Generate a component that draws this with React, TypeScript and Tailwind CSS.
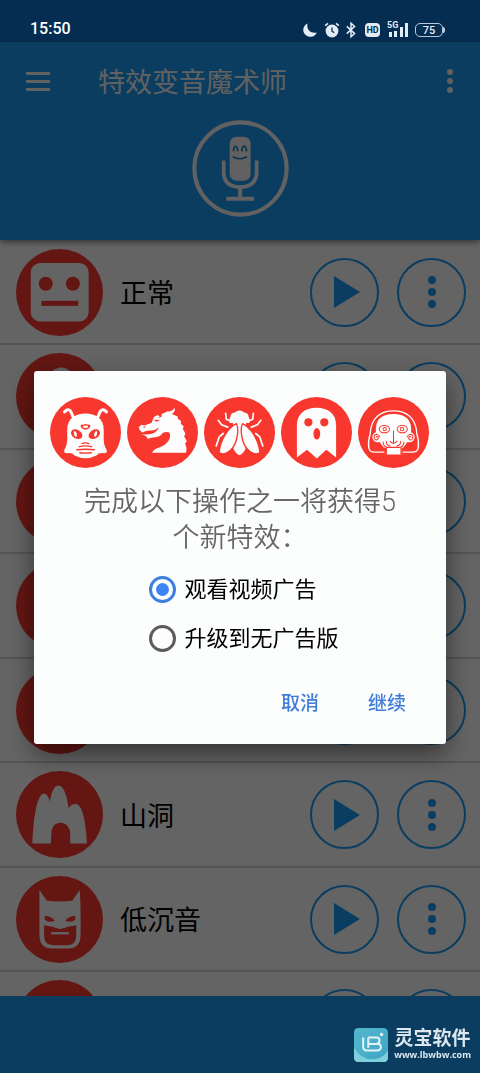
import { useState, type ReactNode } from "react";

type IconProps = { className?: string };

/* Status bar */

function StatusIcons() {
  return (
    <div className="flex items-center text-[#e3ebf6]">
      <svg viewBox="0 0 14 14" className="mr-[7px] size-[14px]" fill="currentColor">
        <path d="M4.6 0.4 A7 7 0 1 0 13.8 9.4 Q8 10.6 5.6 7 Q3.6 4 4.6 0.4Z" />
      </svg>
      <svg viewBox="0 0 16 16" className="mr-[6px] size-4" fill="none" stroke="currentColor">
        <circle cx="8" cy="9" r="6.4" fill="currentColor" stroke="none" />
        <path d="M1.2 3.6 L4 1.4 M14.8 3.6 L12 1.4" strokeWidth="1.7" />
        <path d="M8 5.6 V9.2 L10.2 10.6" stroke="#052d52" strokeWidth="1.3" />
      </svg>
      <svg viewBox="0 0 10 16" className="mr-[9px] h-4 w-[10px]" fill="none" stroke="currentColor" strokeWidth="1.5">
        <path d="M0.8 4.4 L8.6 11.6 L5 14.8 V1.2 L8.6 4.4 L0.8 11.6" />
      </svg>
      <span className="mr-2 flex h-[14px] w-[15px] items-center justify-center rounded-sm bg-[#e3ebf6] text-[9px] leading-none font-bold text-[#052d52]">
        HD
      </span>
      <span className="relative mr-[7px] block h-4 w-5">
        <span className="absolute -top-px -left-px text-[9px] leading-none font-bold">5G</span>
        <svg viewBox="0 0 20 16" className="size-full" fill="currentColor">
          <path d="M1 10h3v5H1zM6 9h3v6H6zM12 5h3v10h-3zM17 1h3v14h-3z" />
        </svg>
      </span>
      <span className="flex items-center">
        <span className="flex h-[14px] w-7 items-center justify-center rounded-[5px] border border-[#b9c8da] text-[11px] leading-none font-medium">
          75
        </span>
        <span className="h-[6px] w-[2px] rounded-r-sm bg-[#b9c8da]" />
      </span>
    </div>
  );
}

/* Round effect icons */

function Disc({ size, className, children }: { size: number; className?: string; children?: ReactNode }) {
  return (
    <svg viewBox={`0 0 ${size} ${size}`} className={className} fill="none" aria-hidden="true">
      <circle cx={size / 2} cy={size / 2} r={size / 2} fill="#f8382f" />
      {children}
    </svg>
  );
}

function RobotIcon({ className }: IconProps) {
  return (
    <Disc size={260} className={className}>
      <rect x="44" y="42" width="173" height="175" rx="28" fill="#fafafa" />
      <circle cx="89" cy="104" r="21" fill="#f8382f" />
      <circle cx="170" cy="104" r="21" fill="#f8382f" />
      <rect x="76" y="155" width="110" height="15" fill="#f8382f" />
    </Disc>
  );
}

function HeadIcon({ className }: IconProps) {
  return (
    <Disc size={260} className={className}>
      <circle cx="135" cy="79" r="36" fill="#fafafa" />
    </Disc>
  );
}

function PlainIcon({ className }: IconProps) {
  return <Disc size={260} className={className} />;
}

function CaveIcon({ className }: IconProps) {
  return (
    <Disc size={260} className={className}>
      <path
        d="M49 217C51 160 60 70 83 67C92 67 98 78 101 91C105 66 113 43 127 43C143 43 153 76 157 111C163 101 172 97 182 99C202 105 210 170 212 217H162V184C160 166 148 155 133 155C118 155 107 166 106 184L104 217Z"
        fill="#fafafa"
      />
    </Disc>
  );
}

function BatIcon({ className }: IconProps) {
  return (
    <Disc size={260} className={className}>
      <path
        d="M70 42L92 74Q131 78 168 74L190 42Q194 80 193 175Q193 217 155 217H108Q70 217 70 175Z"
        fill="#fafafa"
      />
      <path d="M84 147Q110 150 132 159Q155 150 180 147V178Q180 207 153 207H111Q84 207 84 178Z" fill="#f8382f" />
      <path d="M86 119Q106 121 116 134Q96 141 86 130ZM177 119Q157 121 147 134Q167 141 177 130Z" fill="#f8382f" />
      <path d="M105 171H158" stroke="#fafafa" strokeWidth="7" />
    </Disc>
  );
}

function AlienIcon({ className }: IconProps) {
  return (
    <Disc size={210} className={className}>
      <path d="M43 44Q56 31 63 46Q66 58 75 67M167 44Q154 31 147 46Q144 58 135 67" stroke="#fdfdfd" strokeWidth="9" strokeLinecap="round" />
      <path
        d="M51 98C50 64 75 49 105 49S160 64 159 98C159 124 157 139 167 155Q172 167 157 166Q144 165 137 173Q122 181 105 181T73 173Q66 165 53 166Q38 167 43 155C53 139 51 124 51 98Z"
        fill="#fdfdfd"
      />
      <ellipse cx="79" cy="110" rx="18" ry="13" fill="#f8382f" transform="rotate(30 79 110)" />
      <ellipse cx="131" cy="110" rx="18" ry="13" fill="#f8382f" transform="rotate(-30 131 110)" />
      <ellipse cx="75" cy="109" rx="4" ry="9" fill="#fdfdfd" transform="rotate(-15 75 109)" />
      <ellipse cx="135" cy="109" rx="4" ry="9" fill="#fdfdfd" transform="rotate(15 135 109)" />
      <path d="M90 86Q92 79 98 82Q105 77 112 82Q118 79 120 86Q116 96 105 97Q94 96 90 86Z" fill="#f8382f" />
      <ellipse cx="105" cy="88" rx="8" ry="4" fill="#fdfdfd" />
      <path d="M95 138Q105 133 115 138M87 147Q105 142 123 147M79 156Q105 153 131 156M88 165Q105 167 122 165" stroke="#f8382f" strokeWidth="4" strokeLinecap="round" />
    </Disc>
  );
}

function DragonIcon({ className }: IconProps) {
  return (
    <Disc size={210} className={className}>
      <path
        d="M35 89L43 82L52 84L73 76L79 60L90 53L97 57L92 63L103 58L102 51L119 43Q134 44 141 31Q143 46 132 50L149 57L151 65L160 71L159 79L168 87L165 94L173 109L169 116L177 131L172 137Q178 150 175 165H74Q78 155 99 148C121 139 132 122 126 106Q118 101 106 106Q100 118 82 119Q70 119 62 124L56 115L42 110Q62 113 78 107Q87 104 94 90Q82 100 69 99Q58 98 45 105L37 97Z"
        fill="#fdfdfd"
      />
      <path d="M78 67L98 68L88 73ZM47 88L56 87L51 92Z" fill="#f8382f" />
    </Disc>
  );
}

function FlyIcon({ className }: IconProps) {
  return (
    <Disc size={210} className={className}>
      <path
        d="M64 48L66 66L80 72L88 76M42 69L52 82L70 89M57 108L45 118L36 145M146 48L144 66L130 72L122 76M168 69L158 82L140 89M153 108L165 118L174 145"
        stroke="#fdfdfd"
        strokeWidth="5"
        strokeLinecap="round"
        strokeLinejoin="round"
      />
      <path d="M78 59Q79 47 91 46Q105 34 119 46Q131 47 132 59Q138 67 134 77H76Q72 67 78 59Z" fill="#fdfdfd" />
      <path d="M86 76H124L126 140Q123 165 105 172Q87 165 84 140Z" fill="#fdfdfd" />
      <path d="M96 79C104 95 100 151 67 165C57 170 44 169 45 161C49 128 70 91 96 79Z" fill="#fdfdfd" stroke="#f8382f" strokeWidth="4" />
      <path d="M114 79C106 95 110 151 143 165C153 170 166 169 165 161C161 128 140 91 114 79Z" fill="#fdfdfd" stroke="#f8382f" strokeWidth="4" />
    </Disc>
  );
}

function GhostIcon({ className }: IconProps) {
  return (
    <Disc size={210} className={className}>
      <path d="M47 179V83C48 50 70 32 105 32S163 50 163 83V179L134 156L106 182L77 156Z" fill="#fdfdfd" />
      <circle cx="81" cy="75" r="12" fill="#f8382f" />
      <circle cx="128" cy="75" r="12" fill="#f8382f" />
      <ellipse cx="106" cy="109" rx="10" ry="17" fill="#f8382f" />
    </Disc>
  );
}

function PuppetIcon({ className }: IconProps) {
  return (
    <Disc size={210} className={className}>
      <path
        d="M78 163H49Q35 163 32 151Q29 129 36 109C38 60 68 41 105 41S172 60 174 109Q181 129 178 151Q175 163 161 163H132"
        stroke="#fdfdfd"
        strokeWidth="4"
      />
      <path
        d="M76 149L64 133Q47 138 42 120Q43 108 53 104Q48 51 105 50Q162 51 157 104Q167 108 168 120Q163 138 146 133L134 149L128 151V170H83V151Z"
        fill="#fdfdfd"
      />
      <g stroke="#f8382f" strokeWidth="3">
        <ellipse cx="78" cy="95" rx="15" ry="11" />
        <circle cx="79" cy="95" r="5" />
        <ellipse cx="131" cy="95" rx="15" ry="11" />
        <circle cx="130" cy="95" r="5" />
        <path d="M65 119Q59 107 50 112Q44 121 52 127Q61 128 60 119Q55 114 53 120M145 119Q151 107 160 112Q166 121 158 127Q149 128 150 119Q155 114 157 120" />
        <path d="M105 99V139M94 130Q104 144 116 130M84 130Q82 143 96 145M126 130Q128 143 114 145M74 132Q75 149 88 149H122Q135 149 136 132M84 149V171M127 149V171" />
      </g>
    </Disc>
  );
}

function MicIcon({ className }: IconProps) {
  return (
    <svg viewBox="0 0 288 288" className={className} fill="none" stroke="#f3f3f3" aria-hidden="true">
      <circle cx="144" cy="144" r="137" strokeWidth="12" />
      <rect x="112" y="50" width="62" height="130" rx="20" fill="#f3f3f3" stroke="none" />
      <path d="M94 120V153Q94 199 143 199T192 153V120" strokeWidth="11" />
      <path d="M143 200V234M102 234H184" strokeWidth="12" />
      <path d="M123 93Q124 78 129 78T136 93M148 93Q149 78 155 78T162 93M121 109Q142 121 163 109" stroke="#1278c0" strokeWidth="5" />
    </svg>
  );
}

function Dots({ className }: IconProps) {
  return (
    <svg viewBox="0 0 8 32" className={className} fill="currentColor" aria-hidden="true">
      <circle cx="4" cy="4" r="4" />
      <circle cx="4" cy="16" r="4" />
      <circle cx="4" cy="28" r="4" />
    </svg>
  );
}

const effects = [
  { name: "正常", Icon: RobotIcon },
  { name: "", Icon: HeadIcon },
  { name: "", Icon: PlainIcon },
  { name: "", Icon: PlainIcon },
  { name: "", Icon: PlainIcon },
  { name: "山洞", Icon: CaveIcon },
  { name: "低沉音", Icon: BatIcon },
  { name: "", Icon: PlainIcon },
];

const rewards = [AlienIcon, DragonIcon, FlyIcon, GhostIcon, PuppetIcon];

const options = [
  { id: "video", label: "观看视频广告" },
  { id: "upgrade", label: "升级到无广告版" },
];

const roundButton =
  "flex size-[69px] shrink-0 items-center justify-center rounded-full border-2 border-[#1b98ed] text-[#1b98ed]";

export default function App() {
  const [choice, setChoice] = useState("video");

  return (
    <div className="flex h-screen flex-col overflow-hidden bg-[#fafafa] font-[Roboto,'Noto_Sans_CJK_SC',sans-serif]">
      <div className="flex h-[42px] shrink-0 items-end justify-between bg-[#052d52] pr-[35px] pb-1 pl-[30px]">
        <span className="text-base leading-[18px] font-medium text-white">15:50</span>
        <StatusIcons />
      </div>

      {/* Header */}
      <header className="z-10 shrink-0 bg-[#1b98ed] pb-[23px] text-[#f3f3f3] shadow-[0_2px_6px_rgba(0,0,0,0.5)]">
        <div className="flex h-[78px] items-center pr-[26px] pl-[26px]">
          <button type="button" aria-label="菜单" className="flex w-6 flex-col gap-[5px]">
            <span className="h-[3px] bg-current" />
            <span className="h-[3px] bg-current" />
            <span className="h-[3px] bg-current" />
          </button>
          <h1 className="ml-12 flex-1 pt-1 text-[27px] leading-9">特效变音魔术师</h1>
          <button type="button" aria-label="更多">
            <Dots className="h-6 w-2" />
          </button>
        </div>
        <MicIcon className="mx-auto size-[97px]" />
      </header>

      {/* Effects */}
      <ul className="min-h-0 flex-1 overflow-hidden pt-px">
        {effects.map(({ name, Icon }, i) => (
          <li key={i} className="flex h-[104px] items-center border-b-2 border-[#d2d2d2] pr-[14px] pl-4 even:h-[105px]">
            <Icon className="size-[87px] shrink-0" />
            <span className="ml-[17px] flex-1 pt-1 text-[27px] leading-9 text-black">{name}</span>
            <button type="button" aria-label="播放" className={roundButton}>
              <svg viewBox="0 0 26 32" className="ml-1 h-8 w-[26px]" fill="currentColor">
                <path d="M0 0L26 16L0 32Z" />
              </svg>
            </button>
            <button type="button" aria-label="更多" className={`ml-[18px] ${roundButton}`}>
              <Dots className="h-8 w-2" />
            </button>
          </li>
        ))}
      </ul>

      <footer className="h-[77px] shrink-0 bg-[#1b98ed]" />

      {/* Dialog */}
      <div className="fixed inset-x-0 top-[42px] bottom-0 z-20 flex items-center bg-black/60 px-[34px]">
        <form
          role="dialog"
          onSubmit={(e) => e.preventDefault()}
          className="w-full rounded-[3px] bg-[#fcfdfd] pt-[26px] pb-[18px] shadow-[0_10px_26px_rgba(0,0,0,0.5)]"
        >
          <div className="flex justify-center gap-[6px] pr-[2px]">
            {rewards.map((Icon, i) => (
              <Icon key={i} className="size-[71px]" />
            ))}
          </div>
          <p className="mt-4 px-10 text-center text-[27px] leading-9 font-[350] text-[#666]">
            完成以下操作之一将获得5个新特效：
          </p>
          <div className="mx-auto mt-5 flex w-fit flex-col gap-[22px] pl-2">
            {options.map((o) => (
              <label key={o.id} htmlFor={o.id} className="flex items-center gap-2 text-[22px] leading-[27px] text-black">
                <input
                  id={o.id}
                  type="radio"
                  name="choice"
                  checked={choice === o.id}
                  onChange={() => setChoice(o.id)}
                  className="size-[27px] appearance-none rounded-full border-[3px] border-[#5c5c5c] bg-clip-content p-1 checked:border-[#3f7fe0] checked:bg-[#3d85f5]"
                />
                {o.label}
              </label>
            ))}
          </div>
          <div className="mt-[26px] flex justify-end gap-[25px] pr-7 text-[19px] font-medium text-[#3f7bd9]">
            <button type="button" className="h-12 px-3 pt-1">
              取消
            </button>
            <button type="submit" className="h-12 px-3 pt-1">
              继续
            </button>
          </div>
        </form>
      </div>

      {/* Site mark */}
      <div className="fixed right-[9px] bottom-[11px] z-30 flex items-center gap-[6px] text-[#dce6ee]">
        <svg viewBox="0 0 100 100" className="size-[34px]" fill="none">
          <defs>
            <linearGradient id="mark" x1="0" y1="0" x2="1" y2="1">
              <stop offset="0" stopColor="#53b8cd" />
              <stop offset="1" stopColor="#3fa4c4" />
            </linearGradient>
          </defs>
          <rect width="100" height="100" rx="13" fill="url(#mark)" />
          <path d="M0 58Q20 94 60 92Q88 88 100 66V87Q100 100 87 100H13Q0 100 0 87Z" fill="#7fd0dc" />
          <path d="M27 28V56Q27 66 38 66H68Q79 66 79 56T68 47H42M42 28H66Q75 28 75 37T66 47M42 28V58" stroke="#e2f3f7" strokeWidth="6" />
          <circle cx="81" cy="19" r="5" fill="#e2f3f7" />
        </svg>
        <div className="flex flex-col items-center">
          <span className="text-[19px] leading-5 font-bold">灵宝软件</span>
          <span className="font-['Open_Sans',sans-serif] text-[9px] leading-3 font-bold">www.lbwbw.com</span>
        </div>
      </div>
    </div>
  );
}
